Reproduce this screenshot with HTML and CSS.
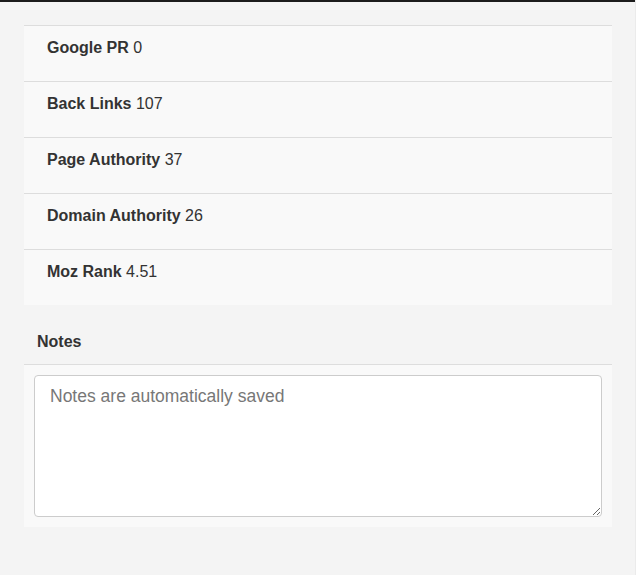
FILE: index.html
```html
<!DOCTYPE html>
<html>
<head>
<meta charset="utf-8">
<link rel="stylesheet" href="styles.css">
</head>
<body>
<div class="topbar"></div>
<main class="page">
  <ul class="stats">
    <li class="stat"><b>Google PR</b> 0</li>
    <li class="stat"><b>Back Links</b> 107</li>
    <li class="stat"><b>Page Authority</b> 37</li>
    <li class="stat"><b>Domain Authority</b> 26</li>
    <li class="stat"><b>Moz Rank</b> 4.51</li>
  </ul>
  <section class="notes">
    <h3 class="notes-title">Notes</h3>
    <div class="notes-body">
      <textarea class="notes-input" placeholder="Notes are automatically saved"></textarea>
    </div>
  </section>
</main>
</body>
</html>
```

FILE: styles.css
```css
* { box-sizing: border-box; }
html, body {
  margin: 0;
  padding: 0;
  height: 100%;
}
body {
  background: #f4f4f4;
  font-family: "Liberation Sans", Arial, sans-serif;
  color: #333;
  font-size: 16px;
  line-height: 22px;
  border-right: 1px solid #ebebeb;
}
.topbar {
  height: 2px;
  background: #1c1c1c;
}
.page {
  padding: 23px 23px 0 24px;
}
.stats {
  list-style: none;
  margin: 0;
  padding: 0;
}
.stat {
  background: #f9f9f9;
  border-top: 1px solid #dddddd;
  padding: 11px 23px 22px 23px;
  height: 56px;
}
.stat b {
  font-weight: bold;
}
.notes-title {
  margin: 0;
  font-size: 16px;
  font-weight: bold;
  line-height: 22px;
  padding: 26px 13px 11px 13px;
  border-bottom: 1px solid #dddddd;
}
.notes-body {
  background: #f9f9f9;
  padding: 10px;
}
.notes-input {
  display: block;
  width: 100%;
  height: 142px;
  margin: 0;
  border: 1px solid #cccccc;
  border-radius: 4px;
  background: #fff;
  font-family: "Liberation Sans", Arial, sans-serif;
  font-size: 17.5px;
  line-height: 24px;
  padding: 8px 15px;
  color: #555;
  resize: vertical;
  outline: none;
}
.notes-input::placeholder {
  color: #777;
  opacity: 1;
}
```
